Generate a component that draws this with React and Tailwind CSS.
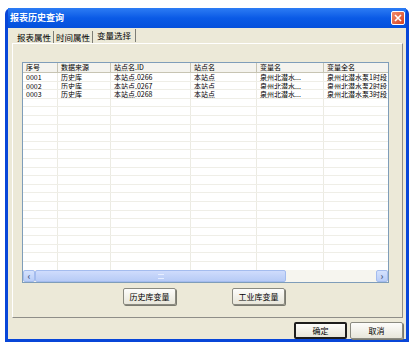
import React from "react";

const cols = [35, 53, 80, 66, 67, 66];
const headers = ["序号", "数据来源", "站点名.ID", "站点名", "变量名", "变量全名"];
const rows = [
  ["0001", "历史库", "本站点.0266", "本站点", "泉州北潜水...", "泉州北潜水泵1时段"],
  ["0002", "历史库", "本站点.0267", "本站点", "泉州北潜水...", "泉州北潜水泵2时段"],
  ["0003", "历史库", "本站点.0268", "本站点", "泉州北潜水...", "泉州北潜水泵3时段"],
];
const EMPTY = 20;

const font = { fontFamily: '"Noto Sans CJK SC", "DejaVu Sans", sans-serif' };

const Cell = ({ w, children, head }) => (
  <div
    className={`shrink-0 overflow-hidden whitespace-nowrap pl-[3px] h-full border-r ${
      head ? "border-[#c7c4b3]" : "border-[#ecebe3]"
    }`}
    style={{ width: w }}
  >
    {children}
  </div>
);

const XpButton = ({ label, def }) => (
  <div
    className={`w-[53px] h-[17px] flex items-center justify-center text-[8px] text-black bg-gradient-to-b from-[#fdfdfb] to-[#e8e6da] rounded-[2px] ${
      def ? "border-[2px] border-[#1d1d1d]" : "border border-[#8a8a80] shadow-[1px_1px_0_#7a7a70]"
    }`}
  >
    {label}
  </div>
);

export default function App() {
  return (
    <div className="w-[415px] h-[344px] bg-white pt-[8px] pl-[5px]" style={font}>
      <div className="w-[404px] h-[334px] bg-[#0846d8] rounded-t-[6px] px-[3px] pb-[3px] flex flex-col">
        {/* title bar */}
        <div className="h-[20px] flex items-center justify-between pl-[2px] pr-[1px] bg-gradient-to-b from-[#2c7cf4] via-[#0a5ae6] to-[#0550dc]">
          <span className="text-white font-bold text-[9px]">报表历史查询</span>
          <div className="w-[14px] h-[14px] rounded-[2px] border border-white bg-gradient-to-br from-[#f08a6a] to-[#d8401a] flex items-center justify-center">
            <svg width="8" height="8" viewBox="0 0 8 8">
              <path d="M1 1L7 7M7 1L1 7" stroke="white" strokeWidth="1.6" />
            </svg>
          </div>
        </div>

        {/* body */}
        <div className="flex-1 bg-[#ece9d8] flex flex-col pl-[4px] pr-[3px]">
          {/* tabs */}
          <div className="h-[15px] pt-[2px] flex items-end text-[8.5px] text-black pl-[5px]">
            <span className="pr-[2px] leading-[12px] border-r border-[#7d7d75]">报表属性</span>
            <span className="px-[2px] leading-[12px] border-r border-[#7d7d75]">时间属性</span>
            <span className="px-[4px] pb-[1px] leading-[12px] border-r border-[#7d7d75] relative -top-[1px]">
              变量选择
            </span>
          </div>

          {/* panel */}
          <div className="h-[275px] border-l border-t border-white border-r border-b border-r-[#8f8e88] border-b-[#8f8e88] flex flex-col pl-[9px]">
            <div className="h-[18px]" />
            {/* grid */}
            <div className="w-[367px] h-[221px] border border-[#7f9db9] bg-white flex flex-col overflow-hidden text-[7px] text-black">
              <div className="h-[10px] flex leading-[9px] bg-[#f4f3ee] border-b border-[#c7c4b3] shrink-0">
                {headers.map((h, i) => (
                  <Cell key={i} w={cols[i]} head>
                    {h}
                  </Cell>
                ))}
              </div>
              <div className="flex-1 overflow-hidden">
                {rows.map((r, ri) => (
                  <div key={ri} className="h-[8.6px] flex leading-[8px] border-b border-[#efeee7]">
                    {r.map((c, ci) => (
                      <Cell key={ci} w={cols[ci]}>
                        {c}
                      </Cell>
                    ))}
                  </div>
                ))}
                {Array.from({ length: EMPTY }).map((_, ri) => (
                  <div key={ri} className="h-[8.6px] flex border-b border-[#efeee7]">
                    {cols.map((w, ci) => (
                      <Cell key={ci} w={w} />
                    ))}
                  </div>
                ))}
              </div>
              {/* horizontal scrollbar */}
              <div className="h-[12px] flex bg-[#f6f5ef] shrink-0">
                <div className="w-[12px] h-full bg-gradient-to-b from-[#d5e2fd] to-[#b9cdf7] border border-[#a4bcee] rounded-[2px] flex items-center justify-center text-[#4d6185] text-[9px] font-bold leading-none">
                  ‹
                </div>
                <div className="w-[251px] h-full bg-gradient-to-b from-[#cfdcfc] to-[#b7cbf6] border border-[#a4bcee] rounded-[2px] flex items-center justify-center">
                  <div className="w-[6px] h-[5px] border-y border-[#e6eeff]" />
                </div>
                <div className="flex-1" />
                <div className="w-[12px] h-full bg-gradient-to-b from-[#d5e2fd] to-[#b9cdf7] border border-[#a4bcee] rounded-[2px] flex items-center justify-center text-[#4d6185] text-[9px] font-bold leading-none">
                  ›
                </div>
              </div>
            </div>
            {/* buttons */}
            <div className="flex pt-[5px] pl-[101px] gap-[56px]">
              <XpButton label="历史库变量" />
              <XpButton label="工业库变量" />
            </div>
          </div>

          {/* bottom buttons */}
          <div className="flex justify-end gap-[3px] pt-[4px] pr-[0px]">
            <XpButton label="确定" def />
            <XpButton label="取消" />
          </div>
        </div>
      </div>
    </div>
  );
}
